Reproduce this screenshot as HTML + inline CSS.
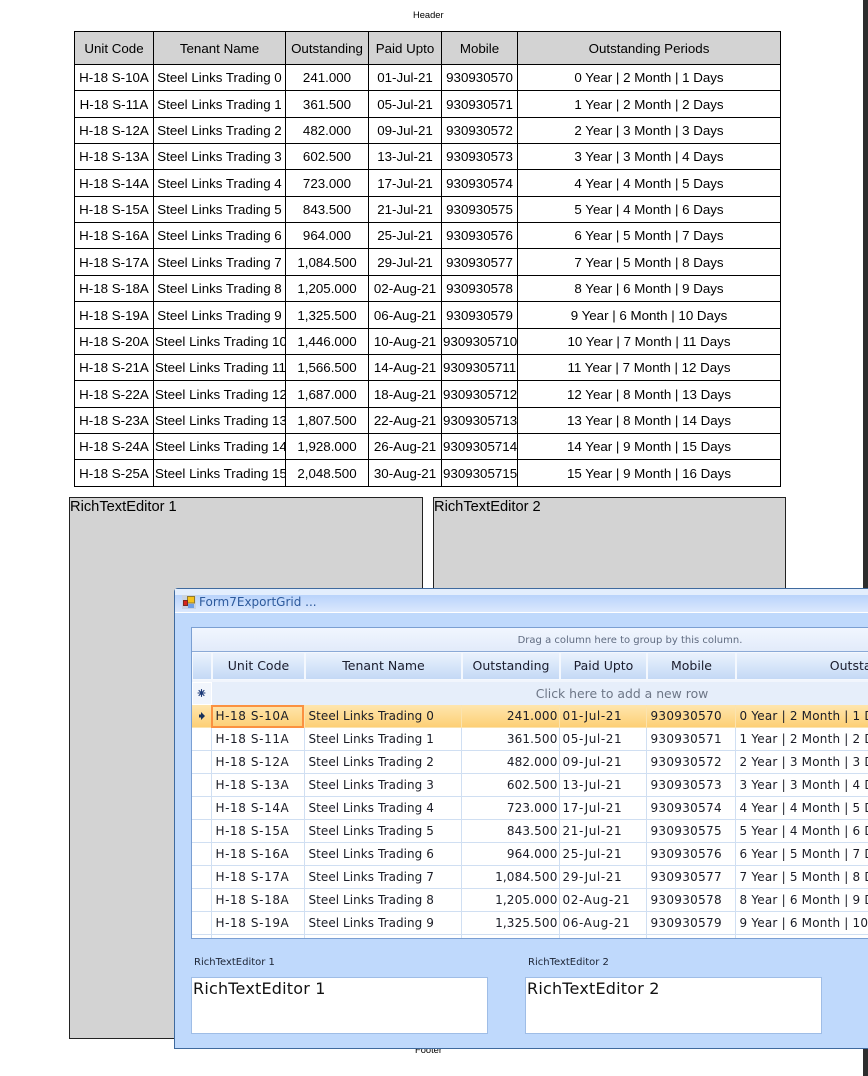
<!DOCTYPE html>
<html><head><meta charset="utf-8"><style>
html,body{margin:0;padding:0;background:#fff}
body{width:868px;height:1076px;position:relative;overflow:hidden;font-family:"Liberation Sans",sans-serif}
.a{position:absolute}
#t{position:absolute;left:74px;top:31px;border-collapse:collapse;table-layout:fixed;width:707px;font-size:13.33px;color:#000}
#t td,#t th{border:1px solid #000;padding:0;text-align:center;white-space:nowrap;overflow:hidden;font-weight:normal}
#t th{background:#d3d3d3;height:32px}
#t tr.y td{height:25px}
#t tr.z td{height:26px}
.box{position:absolute;background:#d3d3d3;border:1px solid #222;box-sizing:border-box;font-size:14.67px;color:#000;line-height:19px;top:497px;height:542px}
#g{position:absolute;top:652px;width:676px;height:286px;overflow:hidden;background:#fff}
#gt{border-collapse:collapse;table-layout:fixed;width:857px;font-family:"DejaVu Sans",sans-serif;font-size:12px;color:#1a1c26}
#gt td{padding:0 0 0 4px;border-right:1px solid #d0dff2;border-bottom:1px solid #d0dff2;height:22px;white-space:nowrap;overflow:hidden;box-sizing:content-box}
#gt td:nth-child(2){letter-spacing:.6px}
#gt td:nth-child(3){letter-spacing:.05px}
#gt td.n{text-align:right;padding:0 1px 0 0;letter-spacing:.15px}
#gt td:nth-child(5){letter-spacing:.6px;padding-left:3px}
#gt td:nth-child(6){letter-spacing:.3px;padding-left:4px}
#gt td:nth-child(7){letter-spacing:.2px}
#gt td.i{background:#fff;padding:0}
#gt tr.s td{background:linear-gradient(#fee6ae,#fdcf75);border-color:#fbe3ae}
#gt tr.s td.c{outline:2px solid #fb9140;outline-offset:-2px}
.h{position:absolute;top:0;height:28px;background:linear-gradient(#eaf2fd,#c4d9f5);border:1px solid #f4f8fe;box-sizing:border-box;text-align:center;font:12.5px/26px "DejaVu Sans",sans-serif;color:#1a1c2c;white-space:nowrap;overflow:hidden}
.ed{position:absolute;top:977px;width:297px;height:57px;background:#fff;border:1px solid #9fbde6;box-sizing:border-box;font:16px/21px "DejaVu Sans",sans-serif;color:#111;padding-left:1px;letter-spacing:.2px}
.lb{position:absolute;top:956px;font:10px/14px "DejaVu Sans",sans-serif;color:#1b2333}
</style></head><body>
<div class="a" style="left:863px;top:0;width:5px;height:1076px;background:#2d2d2d"></div>
<div class="a" style="left:413px;top:9px;font-size:9.33px;line-height:12px;color:#000">Header</div>
<table id="t">
<colgroup><col style="width:79px"><col style="width:132px"><col style="width:83px"><col style="width:73px"><col style="width:76px"><col style="width:263px"></colgroup>
<tr><th>Unit Code</th><th>Tenant Name</th><th>Outstanding</th><th>Paid Upto</th><th>Mobile</th><th>Outstanding Periods</th></tr>
<tr class="y"><td>H-18 S-10A</td><td>Steel Links Trading 0</td><td>241.000</td><td>01-Jul-21</td><td>930930570</td><td>0 Year | 2 Month | 1 Days</td></tr>
<tr class="z"><td>H-18 S-11A</td><td>Steel Links Trading 1</td><td>361.500</td><td>05-Jul-21</td><td>930930571</td><td>1 Year | 2 Month | 2 Days</td></tr>
<tr class="y"><td>H-18 S-12A</td><td>Steel Links Trading 2</td><td>482.000</td><td>09-Jul-21</td><td>930930572</td><td>2 Year | 3 Month | 3 Days</td></tr>
<tr class="y"><td>H-18 S-13A</td><td>Steel Links Trading 3</td><td>602.500</td><td>13-Jul-21</td><td>930930573</td><td>3 Year | 3 Month | 4 Days</td></tr>
<tr class="z"><td>H-18 S-14A</td><td>Steel Links Trading 4</td><td>723.000</td><td>17-Jul-21</td><td>930930574</td><td>4 Year | 4 Month | 5 Days</td></tr>
<tr class="y"><td>H-18 S-15A</td><td>Steel Links Trading 5</td><td>843.500</td><td>21-Jul-21</td><td>930930575</td><td>5 Year | 4 Month | 6 Days</td></tr>
<tr class="y"><td>H-18 S-16A</td><td>Steel Links Trading 6</td><td>964.000</td><td>25-Jul-21</td><td>930930576</td><td>6 Year | 5 Month | 7 Days</td></tr>
<tr class="z"><td>H-18 S-17A</td><td>Steel Links Trading 7</td><td>1,084.500</td><td>29-Jul-21</td><td>930930577</td><td>7 Year | 5 Month | 8 Days</td></tr>
<tr class="y"><td>H-18 S-18A</td><td>Steel Links Trading 8</td><td>1,205.000</td><td>02-Aug-21</td><td>930930578</td><td>8 Year | 6 Month | 9 Days</td></tr>
<tr class="z"><td>H-18 S-19A</td><td>Steel Links Trading 9</td><td>1,325.500</td><td>06-Aug-21</td><td>930930579</td><td>9 Year | 6 Month | 10 Days</td></tr>
<tr class="y"><td>H-18 S-20A</td><td style="text-align:left;padding-left:1px">Steel Links Trading 10</td><td>1,446.000</td><td>10-Aug-21</td><td style="text-align:left;padding-left:1px">9309305710</td><td>10 Year | 7 Month | 11 Days</td></tr>
<tr class="y"><td>H-18 S-21A</td><td style="text-align:left;padding-left:1px">Steel Links Trading 11</td><td>1,566.500</td><td>14-Aug-21</td><td style="text-align:left;padding-left:1px">9309305711</td><td>11 Year | 7 Month | 12 Days</td></tr>
<tr class="z"><td>H-18 S-22A</td><td style="text-align:left;padding-left:1px">Steel Links Trading 12</td><td>1,687.000</td><td>18-Aug-21</td><td style="text-align:left;padding-left:1px">9309305712</td><td>12 Year | 8 Month | 13 Days</td></tr>
<tr class="y"><td>H-18 S-23A</td><td style="text-align:left;padding-left:1px">Steel Links Trading 13</td><td>1,807.500</td><td>22-Aug-21</td><td style="text-align:left;padding-left:1px">9309305713</td><td>13 Year | 8 Month | 14 Days</td></tr>
<tr class="y"><td>H-18 S-24A</td><td style="text-align:left;padding-left:1px">Steel Links Trading 14</td><td>1,928.000</td><td>26-Aug-21</td><td style="text-align:left;padding-left:1px">9309305714</td><td>14 Year | 9 Month | 15 Days</td></tr>
<tr class="z"><td>H-18 S-25A</td><td style="text-align:left;padding-left:1px">Steel Links Trading 15</td><td>2,048.500</td><td>30-Aug-21</td><td style="text-align:left;padding-left:1px">9309305715</td><td>15 Year | 9 Month | 16 Days</td></tr>
</table>
<div class="box" style="left:69px;width:354px">RichTextEditor 1</div>
<div class="box" style="left:433px;width:353px">RichTextEditor 2</div>
<div class="a" style="left:415px;top:1044px;font-size:9.33px;line-height:12px;color:#000">Footer</div>

<!-- window -->
<div class="a" style="left:174px;top:588px;width:694px;height:461px;background:#bfd9fc;border:1px solid #3f6a9e;border-right:0;border-radius:4px 0 0 0;box-sizing:border-box"></div>
<div class="a" style="left:175px;top:589px;width:693px;height:24px;background:#e3eefd;border-bottom:1px solid #fff;box-sizing:border-box"></div>
<div class="a" style="left:175px;top:595px;width:693px;height:17px;background:linear-gradient(#b9d3fb,#dbe8fd)"></div>
<svg class="a" style="left:182px;top:595px" width="14" height="14" viewBox="0 0 14 14"><rect x="0" y="0" width="14" height="14" fill="#c9d3e2"/><rect x="5.500" y="1.500" width="7" height="6.500" fill="#f6c21c" stroke="#8f7a30" stroke-width="1"/><rect x="1.500" y="5.500" width="4" height="5" fill="#d8261c" stroke="#7b2a22" stroke-width="1"/><rect x="6" y="9" width="6" height="4" fill="#6f9fe6"/></svg>
<div class="a" style="left:199px;top:594px;font:12px/16px 'DejaVu Sans',sans-serif;color:#2d5a9c;white-space:nowrap">Form7ExportGrid ...</div>

<!-- grid -->
<div class="a" style="left:191px;top:627px;width:677px;height:312px;background:#fff;border:1px solid #7b9fd2;border-right:0;box-sizing:border-box"></div>
<div class="a" style="left:192px;top:628px;width:676px;height:23px;background:linear-gradient(#f1f6fe,#e2ebfa);border-bottom:1px solid #8aa9d6;text-align:center;font:10px/25px 'DejaVu Sans',sans-serif;color:#5f6b80;text-indent:200px;white-space:nowrap">Drag a column here to group by this column.</div>
<div id="g" style="left:192px">
<div class="h" style="left:0;width:20px"></div>
<div class="h" style="left:20px;width:93px">Unit Code</div>
<div class="h" style="left:113px;width:157px">Tenant Name</div>
<div class="h" style="left:270px;width:98px">Outstanding</div>
<div class="h" style="left:368px;width:87px">Paid Upto</div>
<div class="h" style="left:455px;width:89px">Mobile</div>
<div class="h" style="left:544px;width:314px">Outstanding Periods</div>
<div class="a" style="left:0;top:28px;width:676px;height:2px;background:#f1f5fc"></div>
<div class="a" style="left:20px;top:30px;width:656px;height:23px;background:#e6eefa;text-align:center;font:12.4px/23px 'DejaVu Sans',sans-serif;color:#6d7686;text-indent:164px;white-space:nowrap">Click here to add a new row</div>
<div class="a" style="left:0;top:30px;width:20px;height:23px;background:#f1f5fc;border:1px solid #fff;box-sizing:border-box"></div>
<div class="a" style="left:0;top:53px;width:676px">
<table id="gt"><colgroup><col style="width:19px"><col style="width:93px"><col style="width:157px"><col style="width:98px"><col style="width:87px"><col style="width:89px"><col style="width:314px"></colgroup>
<tr class="s"><td class="i" style="background:linear-gradient(#fee6ae,#fdcf75)"></td><td class="c">H-18 S-10A</td><td>Steel Links Trading 0</td><td class="n">241.000</td><td>01-Jul-21</td><td>930930570</td><td>0 Year | 2 Month | 1 Days</td></tr>
<tr><td class="i"></td><td>H-18 S-11A</td><td>Steel Links Trading 1</td><td class="n">361.500</td><td>05-Jul-21</td><td>930930571</td><td>1 Year | 2 Month | 2 Days</td></tr>
<tr><td class="i"></td><td>H-18 S-12A</td><td>Steel Links Trading 2</td><td class="n">482.000</td><td>09-Jul-21</td><td>930930572</td><td>2 Year | 3 Month | 3 Days</td></tr>
<tr><td class="i"></td><td>H-18 S-13A</td><td>Steel Links Trading 3</td><td class="n">602.500</td><td>13-Jul-21</td><td>930930573</td><td>3 Year | 3 Month | 4 Days</td></tr>
<tr><td class="i"></td><td>H-18 S-14A</td><td>Steel Links Trading 4</td><td class="n">723.000</td><td>17-Jul-21</td><td>930930574</td><td>4 Year | 4 Month | 5 Days</td></tr>
<tr><td class="i"></td><td>H-18 S-15A</td><td>Steel Links Trading 5</td><td class="n">843.500</td><td>21-Jul-21</td><td>930930575</td><td>5 Year | 4 Month | 6 Days</td></tr>
<tr><td class="i"></td><td>H-18 S-16A</td><td>Steel Links Trading 6</td><td class="n">964.000</td><td>25-Jul-21</td><td>930930576</td><td>6 Year | 5 Month | 7 Days</td></tr>
<tr><td class="i"></td><td>H-18 S-17A</td><td>Steel Links Trading 7</td><td class="n">1,084.500</td><td>29-Jul-21</td><td>930930577</td><td>7 Year | 5 Month | 8 Days</td></tr>
<tr><td class="i"></td><td>H-18 S-18A</td><td>Steel Links Trading 8</td><td class="n">1,205.000</td><td>02-Aug-21</td><td>930930578</td><td>8 Year | 6 Month | 9 Days</td></tr>
<tr><td class="i"></td><td>H-18 S-19A</td><td>Steel Links Trading 9</td><td class="n">1,325.500</td><td>06-Aug-21</td><td>930930579</td><td>9 Year | 6 Month | 10 Days</td></tr>
<tr><td class="i"></td><td></td><td></td><td></td><td></td><td></td><td></td></tr>
</table></div>
<svg class="a" style="left:0;top:30px" width="20" height="50" viewBox="0 0 20 50"><g stroke="#1d3a78" stroke-width="1.100" stroke-linecap="round"><path d="M9.500 7.500v7M6 11h7M7 8.500l5 5M12 8.500l-5 5"/></g><path d="M7 32.500h2V30l4 4-4 4v-2.500H7z" fill="#17305c"/></svg>
</div>
<div class="a" style="left:191px;top:938px;width:677px;height:1px;background:#7b9fd2"></div>
<div class="lb" style="left:194px">RichTextEditor 1</div>
<div class="lb" style="left:528px">RichTextEditor 2</div>
<div class="ed" style="left:191px">RichTextEditor 1</div>
<div class="ed" style="left:525px">RichTextEditor 2</div>
</body></html>
